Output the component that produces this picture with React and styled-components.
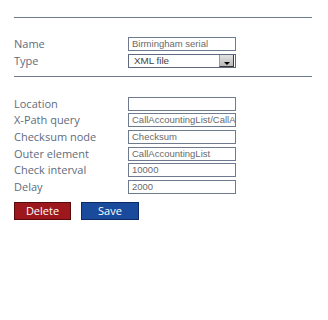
import React from "react";
import styled, { createGlobalStyle } from "styled-components";

const Global = createGlobalStyle`
  html, body { margin: 0; padding: 0; background: #ffffff; }
  body { font-family: "Open Sans", "Liberation Sans", sans-serif; }
`;

const Page = styled.div`
  width: 328px;
  height: 320px;
  box-sizing: border-box;
  padding: 17px 16px 0 14px;
`;

const Rule = styled.div`
  height: 1px;
  background: #6e7b8f;
  margin-bottom: ${(p) => p.$after}px;
`;

const Form = styled.div`
  display: grid;
  grid-template-columns: 114px 108px;
  row-gap: 2.67px;
  margin-bottom: ${(p) => p.$after}px;
`;

const Label = styled.div`
  font-size: 11px;
  line-height: 14px;
  height: 14px;
  color: #5f6c7d;
  white-space: nowrap;
`;

const Input = styled.div`
  box-sizing: border-box;
  height: 14px;
  border: 1px solid #6e7b8f;
  padding: 0 3px;
  font-family: "Liberation Sans", Arial, sans-serif;
  font-size: 9.5px;
  line-height: 12px;
  color: #6a6a6a;
  white-space: nowrap;
  overflow: hidden;
`;

const SelectBox = styled.div`
  box-sizing: border-box;
  height: 14px;
  border: 1px solid #5f6b7c;
  display: flex;
  align-items: stretch;
  justify-content: space-between;
`;

const SelectText = styled.span`
  padding-left: 5px;
  font-family: "Liberation Sans", Arial, sans-serif;
  font-size: 9.8px;
  line-height: 12px;
  color: #444;
`;

const DropButton = styled.span`
  width: 15px;
  box-sizing: border-box;
  margin: 0 1px 0 0;
  background: linear-gradient(#e2e2e2, #b9b9b9);
  border-left: 1px solid #9a9a9a;
  border-bottom: 1px solid #3a3a3a;
  border-right: 1px solid #3a3a3a;
  display: flex;
  align-items: flex-end;
  justify-content: center;
  padding-bottom: 1px;
`;

const Arrow = styled.span`
  width: 0;
  height: 0;
  border-left: 3px solid transparent;
  border-right: 3px solid transparent;
  border-top: 3px solid #000;
`;

const Buttons = styled.div`
  display: flex;
  gap: 10px;
`;

const Button = styled.button`
  box-sizing: border-box;
  width: ${(p) => p.$w}px;
  height: 18.5px;
  padding: 0;
  font-family: "Open Sans", "Liberation Sans", sans-serif;
  font-size: 11px;
  line-height: 16px;
  color: #ffffff;
  background: ${(p) => (p.$kind === "danger" ? "#9c181c" : "#1a4a9b")};
  border: 1px solid ${(p) => (p.$kind === "danger" ? "#5a0a0d" : "#0c2a66")};
  border-radius: 0;
`;

const fields = [
  ["Location", ""],
  ["X-Path query", "CallAccountingList/CallAccounting"],
  ["Checksum node", "Checksum"],
  ["Outer element", "CallAccountingList"],
  ["Check interval", "10000"],
  ["Delay", "2000"],
];

export default function App() {
  return (
    <Page>
      <Global />
      <Rule $after={19} />
      <Form $after={8}>
        <Label>Name</Label>
        <Input>Birmingham serial</Input>
        <Label>Type</Label>
        <SelectBox>
          <SelectText>XML file</SelectText>
          <DropButton>
            <Arrow />
          </DropButton>
        </SelectBox>
      </Form>
      <Rule $after={20} />
      <Form $after={8}>
        {fields.map(([label, value]) => (
          <React.Fragment key={label}>
            <Label>{label}</Label>
            <Input>{value}</Input>
          </React.Fragment>
        ))}
      </Form>
      <Buttons>
        <Button $kind="danger" $w={57}>Delete</Button>
        <Button $kind="primary" $w={58}>Save</Button>
      </Buttons>
    </Page>
  );
}
